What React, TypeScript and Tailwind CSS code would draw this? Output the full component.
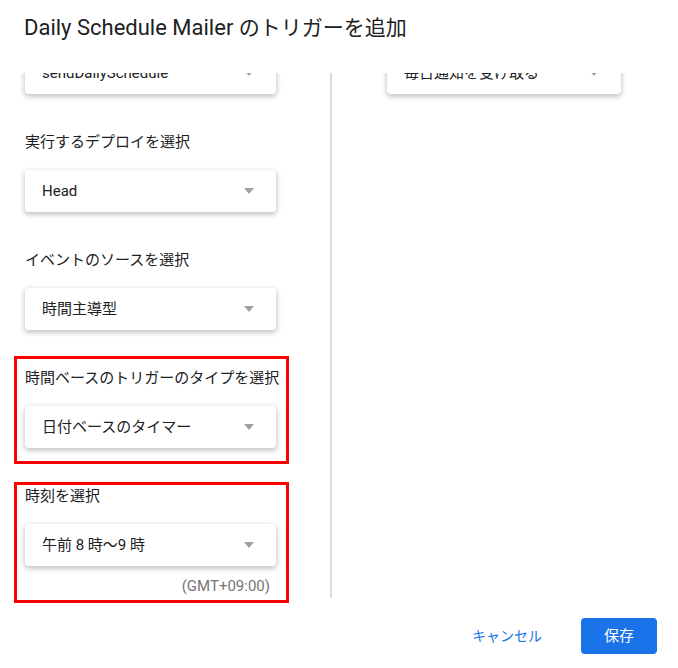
const font = { fontFamily: 'Roboto, "Noto Sans CJK JP", sans-serif' };

function Select({ value, width }: { value: string; width: string }) {
  return (
    <div
      className={`${width} h-[42px] bg-white rounded-[4px] shadow-[0_2px_5px_1px_rgba(0,0,0,0.22)] flex items-center justify-between pl-[17px] pr-[22px]`}
    >
      <span className="text-[15px] text-[#202124] leading-[22px]">{value}</span>
      <span className="w-0 h-0 border-l-[5px] border-r-[5px] border-t-[6px] border-l-transparent border-r-transparent border-t-[#a0a0a0]" />
    </div>
  );
}

function Field({
  label,
  value,
  redBox,
  children,
}: {
  label: string;
  value: string;
  redBox?: string;
  children?: React.ReactNode;
}) {
  return (
    <div className="relative pb-[37px]">
      {redBox && <div className={`absolute border-[3px] border-[#ff0000] ${redBox}`} />}
      <div className="text-[15px] leading-[22px] text-[#202124]">{label}</div>
      <div className="mt-[17px]">
        <Select value={value} width="w-[251px]" />
      </div>
      {children}
    </div>
  );
}

export default function App() {
  return (
    <div className="w-[678px] h-[668px] bg-white overflow-hidden" style={font}>
      <div className="relative z-10 h-[73px] bg-white px-6 pt-[13px]">
        <h1 className="leading-[30px] text-[#202124] font-normal">
          <span className="text-[22px]">Daily Schedule Mailer </span>
          <span className="text-[21px]">のトリガーを追加</span>
        </h1>
      </div>

      <div className="flex h-[525px]">
        <div className="w-[330px] pl-[25px]">
          <div className="-mt-[21px]">
            <div className="pb-[37px]">
              <Select value="sendDailySchedule" width="w-[251px]" />
            </div>
            <Field label="実行するデプロイを選択" value="Head" />
            <Field label="イベントのソースを選択" value="時間主導型" />
            <Field
              label="時間ベースのトリガーのタイプを選択"
              value="日付ベースのタイマー"
              redBox="-left-[11px] -top-[11px] w-[275px] h-[108px]"
            />
            <Field
              label="時刻を選択"
              value="午前 8 時～9 時"
              redBox="-left-[11px] -top-[3px] w-[275px] h-[121px]"
            >
              <div className="mt-[10px] w-[251px] pr-[6px] text-right text-[15px] leading-[20px] text-[#757575]">
                (GMT+09:00)
              </div>
            </Field>
          </div>
        </div>
        <div className="w-[2px] bg-[#dadce0]" />
        <div className="pl-[55px]">
          <div className="-mt-[21px]">
            <Select value="毎日通知を受け取る" width="w-[234px]" />
          </div>
        </div>
      </div>

      <div className="flex justify-end items-center pt-[20px] pr-[21px]">
        <button className="h-9 px-4 mr-[23px] text-[14px] text-[#1a73e8]">キャンセル</button>
        <button className="w-[76px] h-9 rounded-[4px] bg-[#1a73e8] text-white text-[15px]">保存</button>
      </div>
    </div>
  );
}
